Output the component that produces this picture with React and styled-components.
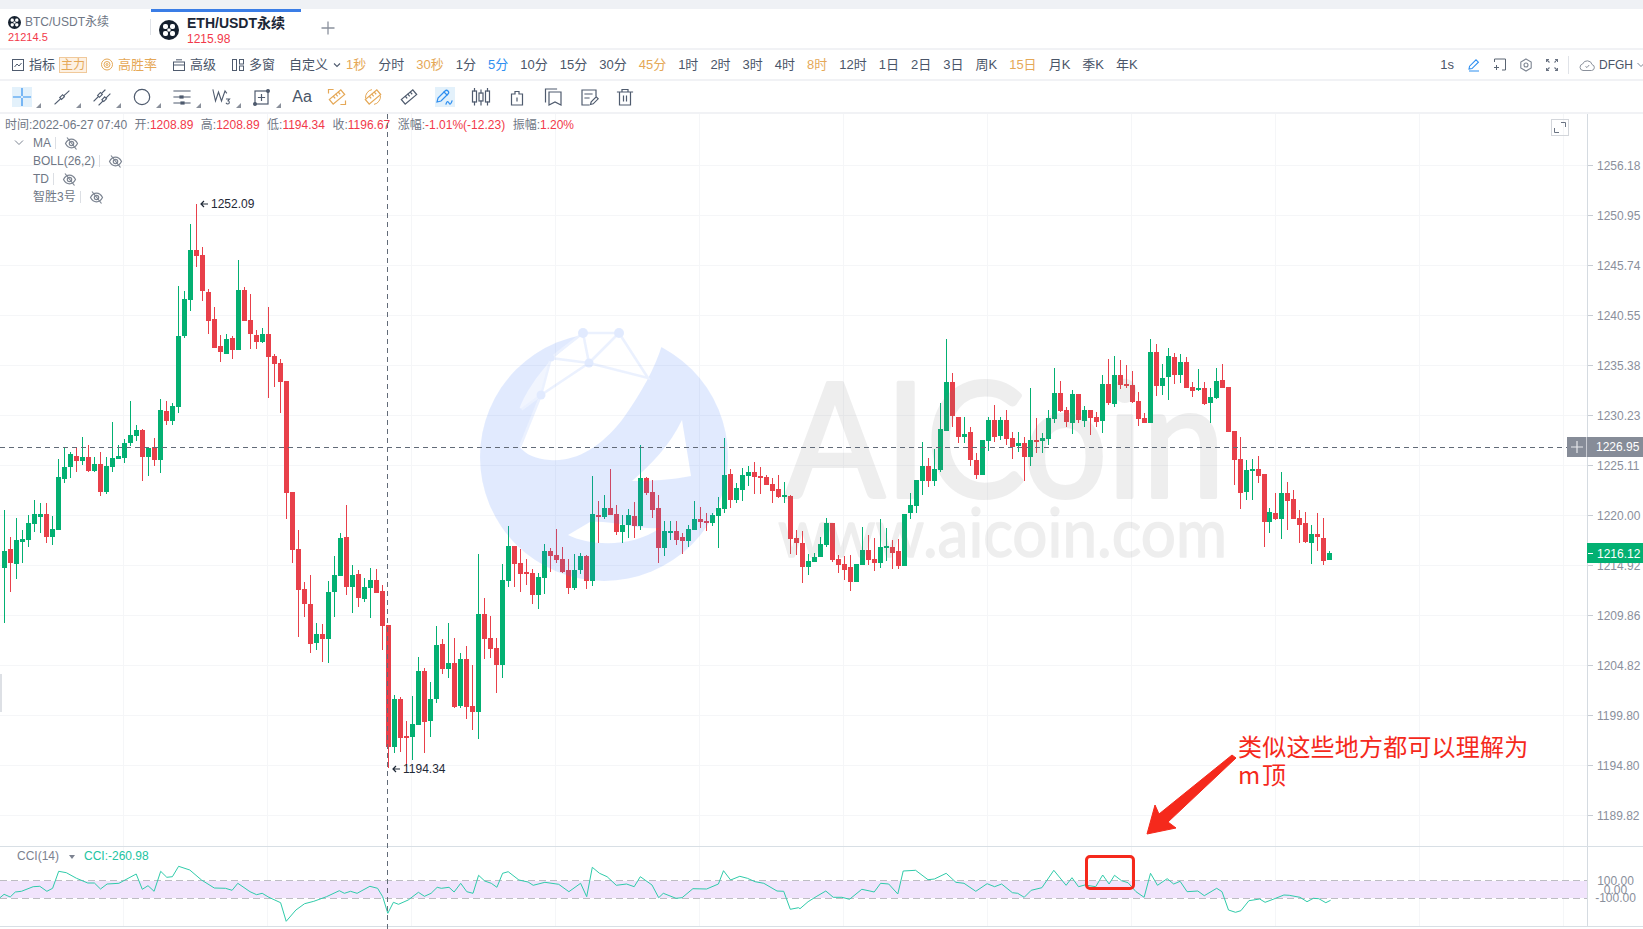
import React from "react";
import styled, { createGlobalStyle } from "styled-components";

const FONT = '"Liberation Sans","Noto Sans CJK SC",sans-serif';
const INK = "#4a5568";
const ORANGE = "#e5a857";
const RED = "#f2394a";
const GREEN = "#03b072";

const Global = createGlobalStyle`
  html, body { margin: 0; padding: 0; background: #fff; }
  body { font-family: ${FONT}; overflow: hidden; }
  #root { width: 1643px; height: 929px; overflow: hidden; }
  * { box-sizing: border-box; }
`;

// [green, wickTop, bodyTop, bodyBottom, wickBottom]
const D = [
[1,510,551,568,623],[0,537,549,563,592],[1,518,540,564,579],[1,530,539,542,563],[1,515,523,540,547],[1,500,514,524,532],[1,503,514,517,533],[0,503,514,537,543],[1,516,529,537,545],[1,459,477,530,530],
[1,447,467,479,483],[1,452,454,467,478],[0,448,456,461,472],[1,437,457,461,465],[0,445,457,471,472],[1,457,464,471,472],[0,452,464,492,496],[1,457,466,492,494],[1,422,458,467,472],[1,445,456,459,459],
[1,439,443,458,463],[1,401,435,443,446],[1,425,430,436,441],[0,429,430,457,481],[1,447,448,457,476],[0,438,447,460,466],[1,399,410,460,473],[0,401,411,421,425],[1,403,406,421,425],[1,286,336,407,413],
[1,291,299,336,338],[1,224,250,300,311],[0,204,250,256,267],[0,247,255,291,301],[0,289,292,321,334],[0,307,319,348,348],[0,335,346,352,362],[1,334,339,354,354],[0,336,338,350,359],[1,260,290,350,350],
[0,287,290,321,321],[0,294,320,334,349],[0,330,335,342,349],[1,328,334,342,343],[0,307,334,357,398],[0,354,356,364,387],[0,359,363,382,413],[0,381,381,493,519],[0,492,492,550,563],[0,530,549,590,637],
[0,582,589,604,617],[0,575,604,644,653],[1,623,634,643,650],[0,624,634,639,662],[1,581,592,639,663],[1,556,575,592,617],[1,533,538,576,576],[0,505,537,587,595],[1,565,575,587,613],[0,570,574,598,607],
[1,578,587,599,602],[1,568,580,588,618],[0,569,580,593,593],[0,585,591,626,650],[0,625,625,747,768],[1,695,699,747,753],[0,697,699,738,752],[0,721,736,738,767],[1,696,724,737,760],[1,657,671,725,725],
[0,668,671,722,753],[1,682,699,721,737],[1,626,645,699,703],[0,639,644,669,674],[1,623,663,669,678],[0,638,663,707,708],[1,653,659,706,708],[0,646,659,707,719],[0,665,706,712,730],[1,554,614,712,739],
[0,598,614,639,659],[0,616,638,649,658],[0,638,648,665,693],[1,564,580,665,678],[1,526,546,581,587],[0,546,546,564,587],[0,549,563,574,592],[0,559,572,574,585],[0,569,573,595,604],[1,573,577,595,609],
[1,544,551,578,594],[0,548,551,556,572],[0,529,555,560,563],[0,547,559,572,573],[0,559,570,588,594],[1,554,570,588,590],[1,553,556,570,574],[0,555,556,581,589],[1,476,514,581,586],[0,501,515,517,543],
[1,495,508,517,519],[0,469,508,515,515],[0,505,514,532,535],[1,515,525,532,543],[1,509,515,525,538],[0,502,516,526,538],[1,445,478,526,530],[0,477,478,493,495],[0,480,492,510,518],[0,495,508,548,563],
[1,521,531,548,556],[1,521,531,532,540],[0,521,531,540,545],[0,533,537,541,554],[1,525,529,541,547],[1,501,519,530,530],[0,507,519,522,528],[0,513,521,523,531],[1,513,515,523,526],[1,497,508,516,548],
[1,438,475,509,513],[0,469,474,500,508],[1,483,488,500,503],[1,468,475,490,501],[1,466,472,476,486],[0,462,472,477,494],[0,467,476,478,494],[0,475,477,485,485],[0,478,484,491,503],[0,475,489,497,498],
[1,482,495,497,503],[0,495,496,539,554],[0,530,538,543,555],[0,531,543,567,583],[1,554,561,567,575],[1,553,557,562,562],[1,537,544,557,557],[1,518,523,545,547],[0,523,523,560,562],[0,555,559,565,573],
[0,556,564,570,580],[0,555,567,582,591],[1,565,564,582,582],[1,527,550,565,565],[0,535,550,560,565],[0,538,559,563,571],[1,519,547,563,568],[1,528,546,548,561],[0,540,547,553,569],[0,539,551,566,569],
[1,514,514,566,566],[1,493,505,513,519],[1,480,480,506,513],[1,442,466,481,495],[0,458,466,481,487],[1,449,469,481,486],[1,403,429,470,472],[1,339,382,431,431],[0,373,382,416,427],[0,417,417,437,443],
[1,417,434,437,443],[0,427,432,460,466],[0,453,460,475,479],[1,440,440,475,475],[1,417,420,441,451],[0,405,420,437,442],[1,417,420,436,440],[0,410,420,439,445],[0,432,438,447,459],[1,432,443,446,452],
[0,437,443,457,481],[1,388,440,457,466],[0,418,440,442,453],[1,433,438,441,453],[1,410,418,439,445],[1,368,393,419,423],[0,381,393,411,412],[0,407,410,422,427],[1,390,394,423,434],[0,394,394,420,423],
[1,406,410,421,427],[0,410,410,418,435],[0,412,417,422,427],[1,375,384,421,433],[0,359,384,403,405],[1,356,375,404,407],[0,360,375,385,389],[0,365,384,386,388],[0,371,385,402,403],[0,392,401,419,426],
[0,413,418,423,423],[1,339,352,423,423],[0,344,352,386,396],[1,364,378,386,395],[1,348,356,377,400],[0,353,357,375,384],[1,354,362,375,383],[0,357,362,388,388],[0,382,387,391,397],[1,369,388,390,391],
[0,382,388,404,405],[1,388,397,403,423],[1,368,381,398,399],[0,364,380,388,388],[0,387,387,432,432],[0,431,431,460,485],[0,437,459,493,509],[1,460,470,492,500],[1,459,469,471,500],[0,456,469,476,483],
[0,474,474,522,547],[1,508,512,522,533],[0,493,513,519,520],[1,472,493,519,539],[0,482,493,501,530],[0,490,499,519,519],[0,510,518,525,543],[0,512,523,542,543],[1,525,534,543,564],[0,513,534,537,551],
[0,518,538,561,565],[1,551,553,560,560]];

const P6 = [[0,203],[8,193],[20,201],[30,186],[42,184],[65,170],[78,169],[92,184],[103,175],[115,124],[130,128],[150,145],[172,159],[185,159],[197,177],[210,162],[233,160],[267,132],[279,178],[290,167],[302,184],[315,124],[327,142],[338,140],[350,109],[372,120],[395,150],[420,174],[442,175],[455,181],[466,160],[490,185],[503,194],[514,190],[527,202],[550,218],[561,274],[580,240],[597,221],[615,214],[640,200],[665,182],[675,190],[687,184],[700,190],[725,169],[740,175],[750,200],[760,250],[771,217],[781,223],[800,210],[820,187],[832,199],[845,190],[857,172],[865,175],[880,172],[890,186],[903,160],[915,185],[927,190],[938,136],[950,153],[963,160],[974,172],[985,130],[996,125],[1017,150],[1035,156],[1045,166],[1068,157],[1095,163],[1115,185],[1138,160],[1150,200],[1161,112],[1175,130],[1190,140],[1208,166],[1228,162],[1243,170],[1255,140],[1278,165],[1291,203],[1300,190],[1325,205],[1337,203],[1358,176],[1385,177],[1408,162],[1418,122],[1432,150],[1450,139],[1465,145],[1480,155],[1497,160],[1523,183],[1536,184],[1549,238],[1565,233]];
const P7 = [[0,566],[15,545],[30,530],[48,513],[62,532],[78,532],[92,538],[115,508],[130,513],[138,516],[150,490],[165,492],[182,522],[192,453],[215,451],[238,479],[250,477],[272,460],[290,487],[305,490],[327,514],[348,491],[362,500],[375,492],[395,518],[405,520],[417,532],[430,511],[450,503],[472,451],[495,496],[506,473],[518,500],[530,495],[550,500],[563,465],[575,492],[585,466],[598,482],[610,488],[625,515],[640,532],[652,460],[665,496],[683,476],[695,492],[707,484],[720,515],[740,513],[752,527],[775,505],[785,515],[797,570],[810,577],[820,572],[835,542],[855,537],[865,547],[880,538],[900,525],[910,526],[930,532],[943,545],[955,535],[965,536],[978,548],[987,541]];
const CCI = [
  ...P6.map(([x, y]) => `${(x / 1.96).toFixed(1)},${(830 + y / 3).toFixed(1)}`),
  ...P7.map(([x, y]) => `${(800 + x / 1.86).toFixed(1)},${(720 + y / 3).toFixed(1)}`),
].join(" ");

const PRICES = ["1256.18","1250.95","1245.74","1240.55","1235.38","1230.23","1225.11","1220.00","1214.92","1209.86","1204.82","1199.80","1194.80","1189.82"];
const VGRID = Array.from({ length: 11 }, (_, i) => 123 + 144 * i);
const HGRID = PRICES.map((_, i) => 165 + 50 * i);

const Page = styled.div`
  width: 1643px;
  height: 929px;
  display: flex;
  flex-direction: column;
  background: #fff;
  color: ${INK};
  font: 13px/1 ${FONT};
`;
const TopStrip = styled.div`height: 9px; background: #eff1f5; flex: none;`;
const TabBar = styled.div`
  height: 41px;
  flex: none;
  display: flex;
  border-bottom: 2px solid #f1f2f5;
`;
const Tab = styled.div`
  position: relative;
  display: flex;
  width: ${p => p.$w}px;
  flex: none;
`;
const SmallTab = styled(Tab)`
  flex-direction: column;
  padding: 7px 0 0 8px;
  gap: 2px;
`;
const ActiveTab = styled(Tab)`
  border-top: 3px solid #3a7de6;
  padding: 4px 0 0 8px;
  gap: 8px;
  align-items: flex-start;
`;
const TabDivider = styled.span`
  width: 1px;
  height: 16px;
  margin: 10px 0 0;
  background: #dfe2e7;
  flex: none;
`;
const TabTitleRow = styled.div`
  display: flex;
  align-items: center;
  gap: 4px;
  font-size: 12px;
  color: #6f7785;
  line-height: 13px;
`;
const TabTitle = styled.div`
  font-size: 14px;
  line-height: 15px;
  font-weight: 700;
  color: #1b2636;
`;
const TabPrice = styled.div`
  font-size: ${p => p.$size}px;
  color: ${RED};
  line-height: 13px;
  margin-top: ${p => p.$mt || 0}px;
`;
const TabText = styled.div`display: flex; flex-direction: column;`;
const LogoSlot = styled.div`display: flex; margin-top: 4px;`;
const AddTab = styled.div`
  margin: 12px 0 0 20px;
  color: #8b919d;
  display: flex;
`;
const PeriodBar = styled.div`
  height: 31px;
  flex: none;
  display: flex;
  align-items: center;
  padding-left: 12px;
  border-bottom: 2px solid #f1f2f5;
`;
const MenuItem = styled.div`
  display: flex;
  align-items: center;
  gap: 5px;
  margin-right: ${p => p.$mr ?? 16}px;
  color: ${p => p.$color || INK};
  white-space: nowrap;
`;
const Badge = styled.span`
  width: 28px;
  height: 16px;
  display: flex;
  align-items: center;
  justify-content: center;
  background: #fdf1e3;
  border: 1px solid #f0c99b;
  color: ${ORANGE};
  font-size: 12px;
`;
const Periods = styled.div`display: flex; gap: 12px;`;
const Period = styled.span`
  color: ${p => p.$tone === "o" ? ORANGE : p.$tone === "b" ? "#2f8ff0" : INK};
  white-space: nowrap;
`;
const RightTools = styled.div`
  margin-left: auto;
  display: flex;
  align-items: center;
  gap: 14px;
`;
const VSep = styled.span`width: 1px; height: 18px; background: #e0e3e8; margin: 0 -4px 0 -4px;`;
const Account = styled.div`
  display: flex;
  align-items: center;
  gap: 4px;
  font-size: 12px;
  color: ${INK};
  margin-left: -10px;
`;
const Chevron = styled.svg`margin-right: -2px;`;
const ToolBar = styled.div`
  height: 33px;
  flex: none;
  display: flex;
  align-items: center;
  padding-left: 2px;
  border-bottom: 2px solid #f1f2f5;
`;
const Tool = styled.div`
  position: relative;
  width: ${p => p.$w || 40}px;
  height: 20px;
  margin-left: ${p => p.$ml || 0}px;
  display: flex;
  align-items: center;
  justify-content: center;
  flex: none;
  ${p => p.$corner && `
    &::after {
      content: "";
      position: absolute;
      right: 1px;
      bottom: -1px;
      border-style: solid;
      border-width: 0 0 5px 5px;
      border-color: transparent transparent #8a909b transparent;
    }
  `}
`;
const ToolFace = styled.div`
  width: 20px;
  height: 20px;
  display: flex;
  align-items: center;
  justify-content: center;
  background: ${p => p.$on ? "#e3f1fb" : "transparent"};
  font-size: 16px;
  color: ${INK};
`;
const Chart = styled.div`
  position: relative;
  flex: 1;
  display: flex;
  flex-direction: column;
`;
const Pane = styled.div`
  position: relative;
  display: flex;
  height: ${p => p.$h}px;
  flex: none;
  border-bottom: 1px solid #d8dfe5;
`;
const Plot = styled.div`
  position: relative;
  width: 1587px;
  flex: none;
  svg { display: block; }
`;
const Axis = styled.div`
  flex: 1;
  border-left: 1px solid #d5dbe1;
  padding-top: 26px;
  display: flex;
  flex-direction: column;
`;
const AxisLabel = styled.div`
  position: relative;
  height: 50px;
  padding: 19px 0 0 9px;
  line-height: 14px;
  font-size: 12px;
  color: #8a8f9c;
  &::before {
    content: "";
    position: absolute;
    left: 0;
    top: 25px;
    width: 5px;
    height: 1px;
    background: #c8cdd4;
  }
`;
const CciAxis = styled(Axis)`
  padding-top: 30px;
  align-items: center;
`;
const CciLabel = styled.div`
  height: 8.5px;
  line-height: 8.5px;
  font-size: 12px;
  color: #8a8f9c;
`;
const VCross = styled.div`
  position: absolute;
  left: 387px;
  top: 0;
  bottom: 0;
  width: 1px;
  background: repeating-linear-gradient(to bottom, #626b78 0 5px, transparent 5px 9px);
  pointer-events: none;
`;
const InfoLine = styled.div`
  position: absolute;
  left: 5px;
  top: 5px;
  display: flex;
  gap: 7.5px;
  font-size: 12px;
  line-height: 13px;
  color: #6f7785;
  white-space: nowrap;
`;
const Red = styled.span`color: ${RED};`;
const Legend = styled.div`
  position: absolute;
  left: 33px;
  top: 20px;
  display: flex;
  flex-direction: column;
  font-size: 12px;
  color: #6f7785;
`;
const LegendRow = styled.div`
  position: relative;
  height: 18px;
  display: flex;
  align-items: center;
`;
const LegendSep = styled.span`
  width: 1px;
  height: 12px;
  background: #dcdfe4;
  margin: 0 8px 0 4px;
`;
const Collapse = styled.svg`position: absolute; left: -19px; top: 5px;`;
const Extreme = styled.div`
  position: absolute;
  left: ${p => p.$x}px;
  top: ${p => p.$y}px;
  display: flex;
  align-items: center;
  gap: 3px;
  font-size: 12px;
  line-height: 14px;
  color: #1f2937;
`;
const ExpandBox = styled.div`
  position: absolute;
  left: 1551px;
  top: 5px;
  width: 18px;
  height: 17px;
  border: 1px solid #d3d6db;
  display: flex;
  align-items: center;
  justify-content: center;
`;
const ScrollThumb = styled.div`
  position: absolute;
  left: 0;
  top: 560px;
  width: 2px;
  height: 38px;
  background: #dde0e5;
`;
const Note = styled.div`
  position: absolute;
  left: 1238px;
  top: 618px;
  font: 24px/28px "Noto Sans CJK SC", ${FONT};
  letter-spacing: 0.2px;
  word-spacing: -4px;
  color: #f5291c;
  white-space: nowrap;
`;
const CrossTag = styled.div`
  position: absolute;
  left: 1567px;
  top: 323px;
  width: 76px;
  height: 20px;
  display: flex;
  align-items: center;
  background: #868c98;
  color: #fff;
  font-size: 12px;
  line-height: 22px;
`;
const CrossPlus = styled.div`
  width: 20px;
  height: 20px;
  flex: none;
  display: flex;
  align-items: center;
  justify-content: center;
  border-right: 1px solid #c9ccd3;
  margin-right: 9px;
`;
const LastTag = styled.div`
  position: absolute;
  left: 1587px;
  top: 429px;
  width: 56px;
  height: 20px;
  padding: 1px 0 0 10px;
  display: flex;
  align-items: center;
  background: ${GREEN};
  color: #fff;
  font-size: 12px;
  &::before {
    content: "";
    position: absolute;
    left: 1px;
    top: 10px;
    width: 5px;
    height: 1px;
    background: #fff;
  }
`;
const CciLegend = styled.div`
  position: absolute;
  left: 17px;
  top: 3px;
  display: flex;
  align-items: center;
  font-size: 12px;
  line-height: 13px;
  color: #7c8290;
`;
const Caret = styled.span`
  width: 0;
  height: 0;
  margin: 0 9px 0 10px;
  border-style: solid;
  border-width: 4px 3.5px 0 3.5px;
  border-color: #7c8290 transparent transparent transparent;
`;
const CciValue = styled.span`color: #22c4a1;`;
const Marker = styled.div`
  position: absolute;
  left: 1085px;
  top: 8px;
  width: 50px;
  height: 35px;
  border: 3px solid #f5291c;
  border-radius: 5px;
`;

const Ico = ({ s = 20, w = 1.2, c = "#4f5b6e", children }) => (
  <svg width={s} height={s} viewBox="0 0 20 20" fill="none" stroke={c} strokeWidth={w} strokeLinecap="square">{children}</svg>
);

const OkLogo = ({ s }) => (
  <svg width={s} height={s} viewBox="0 0 20 20">
    <circle cx="10" cy="10" r="10" fill="#15202e" />
    <g fill="#fff">
      <rect x="4" y="4" width="5" height="5" rx="2" />
      <rect x="11" y="4" width="5" height="5" rx="2" />
      <rect x="4" y="11" width="5" height="5" rx="2" />
      <rect x="11" y="11" width="5" height="5" rx="2" />
      <rect x="8.4" y="8.4" width="3.2" height="3.2" rx="1" />
    </g>
  </svg>
);

const EyeOff = () => (
  <svg width="15" height="15" viewBox="0 0 15 15" fill="none" stroke="#7d8592" strokeWidth="1.2">
    <path d="M1.5 7.5C3 4.6 5 3.2 7.5 3.2s4.5 1.4 6 4.3c-1.5 2.9-3.5 4.3-6 4.3s-4.5-1.4-6-4.3z" />
    <circle cx="7.5" cy="7.5" r="2.2" />
    <path d="M3 1.5l9.5 12" />
  </svg>
);

const LeftArrow = () => (
  <svg width="8" height="8" viewBox="0 0 8 8" fill="none" stroke="#1f2937" strokeWidth="1.2"><path d="M8 4H1M4 1L1 4l3 3" /></svg>
);

const RulerShape = ({ c }) => (
  <g stroke={c} fill="none" strokeWidth="1.2">
    <rect x="-7.5" y="-3" width="15" height="6" transform="rotate(-40 10 10) translate(10 10)" />
    <path d="M6.5 9.5l1.3 1.5M9 7.4l1.3 1.5M11.5 5.3l1.3 1.5" />
  </g>
);

const TOOLS = [
  { on: true, corner: true, icon: <Ico c="#2f8ff0"><path d="M1.5 10h7M11.5 10h7M10 1.5v7M10 11.5v7" /></Ico> },
  { corner: true, icon: <Ico w={1.1}><path d="M3 17L17 4" /><rect x="8" y="8.8" width="4" height="2.6" transform="rotate(-43 10 10)" fill="#fff" /></Ico> },
  { corner: true, icon: <Ico w={1.1}><path d="M2 14L13 3M7 18L18 7" /><rect x="6" y="6.6" width="4" height="2.6" transform="rotate(-45 8 8)" fill="#fff" /><rect x="10" y="11" width="4" height="2.6" transform="rotate(-45 12 12)" fill="#fff" /></Ico> },
  { corner: true, icon: <Ico s={20}><circle cx="10" cy="10" r="7.7" /></Ico> },
  { corner: true, icon: <Ico s={20}><path d="M2 4h16M2 10h16M2 16h16" /><rect x="8" y="9" width="3" height="2" fill="#4f5b6e" /><rect x="9" y="15" width="3" height="2" fill="#4f5b6e" /></Ico> },
  { corner: true, icon: <Ico w={1.1}><path d="M1 3l2.5 11 3-9 3 9 3.5-10 1.5 2" /><path d="M14.5 12h3l-1.5 1.8c1.8.2 1.8 3.2-.2 3.2-.8 0-1.3-.4-1.5-.8" /></Ico> },
  { corner: true, icon: <Ico><rect x="3" y="4" width="13" height="13" /><path d="M9.5 7.5v6M6.5 10.5h6" /><circle cx="16" cy="4" r="1.4" fill="#4f5b6e" /><circle cx="3" cy="17" r="1.4" fill="#4f5b6e" /></Ico> },
  { text: "Aa" },
];
const TOOLS2 = [
  { icon: <Ico c={ORANGE}><RulerShape c={ORANGE} /><path d="M1.5 6V2.5H6M18.5 14v3.5H14" /></Ico> },
  { icon: <Ico c={ORANGE} w={1}><RulerShape c={ORANGE} /><path d="M2.5 11a7.5 7.5 0 0 1 6-8.3M17.5 9a7.5 7.5 0 0 1-6 8.3" /></Ico> },
  { icon: <Ico><RulerShape c="#4f5b6e" /></Ico> },
  { on: true, icon: <Ico c="#2f8ff0"><path d="M2 15l1-4 7-7c1-1 2-1 3 0s1 2 0 3l-7 7z" /><path d="M9 5l3 3M11 17c1-3 2-3 3-1s2 1 3-2" /></Ico> },
  { icon: <Ico><rect x="1.5" y="4" width="4" height="11" /><rect x="8" y="6" width="4" height="8" /><rect x="14.5" y="4" width="4" height="11" /><path d="M3.5 1.5V4M3.5 15v3M10 3v3M10 14v4M16.5 1.5V4M16.5 15v3" /></Ico> },
  { icon: <Ico><path d="M4.5 7h3.5V4.5h4V7h3.5v11h-11z" /><path d="M10 11v3" /></Ico> },
  { icon: <Ico><path d="M2.5 15V2h11" /><path d="M6 5h12v13l-6-3-6 3z" /></Ico> },
  { icon: <Ico><path d="M17 9V3H3v15h7" /><path d="M6 7h7M6 11h4" /><path d="M11.5 17.5l.7-2.7 5-5 2 2-5 5z" /></Ico> },
  { icon: <Ico><path d="M2.5 5h15M7 5V2.5h6V5M4.5 5v13h11V5" /><path d="M8.5 9v5M11.5 9v5" /></Ico> },
];

const PERIODS = [
  ["1秒","o"],["分时"],["30秒","o"],["1分"],["5分","b"],["10分"],["15分"],["30分"],["45分","o"],["1时"],["2时"],["3时"],["4时"],["8时","o"],["12时"],["1日"],["2日"],["3日"],["周K"],["15日","o"],["月K"],["季K"],["年K"],
];

const Watermark = () => (
  <g>
    <defs>
      <mask id="wm" maskUnits="userSpaceOnUse" x="470" y="320" width="270" height="270">
        <circle cx="604" cy="457" r="124" fill="#fff" />
        <path d="M551 360L583 333L619 331L662 345C655 368 642 392 622 420C600 448 575 462 550 460C535 459 525 454 520 447L541 395Z" fill="#000" />
        <path d="M551 360L541 395L518 412C525 392 538 375 551 360Z" fill="#777" />
        <path d="M682 420L691 476C672 480 650 481 632 481C652 464 670 445 682 420Z" fill="#000" />
        <path d="M568 535C590 546 632 548 660 528C638 530 612 520 590 522Z" fill="#000" />
        <g stroke="#aaa" strokeWidth="2.6" fill="none">
          <path d="M583 333L619 333L589 363L583 333L551 358L589 363L648 378L619 333M589 363L541 395L551 358M541 395L518 412M541 395L520 447" />
        </g>
        <g fill="#fff">
          <circle cx="583" cy="333" r="5" /><circle cx="619" cy="333" r="5" /><circle cx="589" cy="363" r="4.5" />
          <circle cx="551" cy="358" r="3.5" /><circle cx="541" cy="395" r="4.5" /><circle cx="518" cy="412" r="4.5" />
        </g>
      </mask>
    </defs>
    <rect x="470" y="320" width="270" height="270" fill="rgb(60,120,250)" opacity="0.15" mask="url(#wm)" />
    <g fill="rgb(120,120,120)" opacity="0.12" stroke="rgb(120,120,120)" strokeLinejoin="round" fontFamily="Lato, sans-serif">
      <text x="785" y="497" fontSize="160" strokeWidth="4" textLength="440" lengthAdjust="spacingAndGlyphs">AICoin</text>
      <text x="778" y="557" fontSize="68" strokeWidth="1.5" textLength="449" lengthAdjust="spacingAndGlyphs">www.aicoin.com</text>
    </g>
  </g>
);

const Candles = () => (
  <g shapeRendering="crispEdges">
    {D.map(([g, wt, bt, bb, wb], i) => {
      const x = Math.round(4.63 + 5.997 * i - 2.5);
      const c = g ? GREEN : "#e8404a";
      return (
        <g key={i} fill={c}>
          <rect x={x + 2} y={wt} width="1" height={Math.max(wb - wt, 1)} />
          <rect x={x} y={bt} width="5" height={Math.max(bb - bt, 2)} />
        </g>
      );
    })}
  </g>
);

export default function App() {
  return (
    <Page>
      <Global />
      <TopStrip />
      <TabBar>
        <SmallTab $w={150}>
          <TabTitleRow><OkLogo s={13} />BTC/USDT永续</TabTitleRow>
          <TabPrice $size={11}>21214.5</TabPrice>
        </SmallTab>
        <TabDivider />
        <ActiveTab $w={150}>
          <LogoSlot><OkLogo s={20} /></LogoSlot>
          <TabText>
            <TabTitle>ETH/USDT永续</TabTitle>
            <TabPrice $size={12} $mt={2}>1215.98</TabPrice>
          </TabText>
        </ActiveTab>
        <AddTab>
          <svg width="14" height="14" viewBox="0 0 14 14" stroke="#8b919d" strokeWidth="1.3"><path d="M7 .5v13M.5 7h13" /></svg>
        </AddTab>
      </TabBar>
      <PeriodBar>
        <MenuItem $mr={4}>
          <svg width="12" height="12" viewBox="0 0 12 12" fill="none" stroke="#4f5b6e" strokeWidth="1"><rect x=".5" y=".5" width="11" height="11" /><path d="M2.5 8l2.5-3 2 2 2.5-3" /></svg>
          指标
        </MenuItem>
        <MenuItem $mr={14}><Badge>主力</Badge></MenuItem>
        <MenuItem $color={ORANGE}>
          <svg width="12" height="13" viewBox="0 0 12 13" fill="none" stroke={ORANGE} strokeWidth="1"><circle cx="6" cy="6.5" r="5.5" /><circle cx="6" cy="6.5" r="3" /><circle cx="6" cy="6.5" r="1" /></svg>
          高胜率
        </MenuItem>
        <MenuItem>
          <svg width="12" height="12" viewBox="0 0 12 12" fill="none" stroke="#4f5b6e" strokeWidth="1"><rect x=".5" y="3" width="11" height="8.5" /><path d="M.5 6h11M3 .8h6" /></svg>
          高级
        </MenuItem>
        <MenuItem $mr={14}>
          <svg width="12" height="12" viewBox="0 0 12 12" fill="none" stroke="#4f5b6e" strokeWidth="1"><rect x=".5" y=".5" width="4" height="11" /><rect x="7.5" y=".5" width="4" height="4.5" /><rect x="7.5" y="7" width="4" height="4.5" /></svg>
          多窗
        </MenuItem>
        <MenuItem $mr={5}>
          自定义
          <svg width="8" height="6" viewBox="0 0 8 6" fill="none" stroke="#4f5b6e" strokeWidth="1.1"><path d="M1 1.5l3 3 3-3" /></svg>
        </MenuItem>
        <Periods>
          {PERIODS.map(([t, tone]) => <Period key={t} $tone={tone}>{t}</Period>)}
        </Periods>
        <RightTools>
          <Period>1s</Period>
          <svg width="12" height="14" viewBox="0 0 12 14" fill="none" stroke="#2f8ff0" strokeWidth="1.1"><path d="M1 11l.6-2.8L8 1.8l2.4 2.4L4 10.6zM1 13h10" /></svg>
          <svg width="12" height="13" viewBox="0 0 12 13" fill="none" stroke="#5a6472" strokeWidth="1"><path d="M.5 1h11v11H8M0 9.5h5M2.5 7v5M.5 1v3" /></svg>
          <svg width="12" height="14" viewBox="0 0 12 14" fill="none" stroke="#7d8592" strokeWidth="1.1"><path d="M6 1l5.2 3v6L6 13 .8 10V4z" /><circle cx="6" cy="7" r="2" /></svg>
          <svg width="12" height="12" viewBox="0 0 12 12" fill="none" stroke="#6a7382" strokeWidth="1.1"><path d="M.5 3V.5H3M9 .5h2.5V3M11.5 9v2.5H9M3 11.5H.5V9M1 1l2.5 2.5M11 1L8.5 3.5M11 11L8.5 8.5M1 11l2.5-2.5" /></svg>
          <VSep />
          <svg width="16" height="12" viewBox="0 0 16 12" fill="none" stroke="#8a909b" strokeWidth="1"><path d="M4 11.5h8.5a3 3 0 0 0 .6-5.9A5 5 0 0 0 3.6 5 3.3 3.3 0 0 0 4 11.5z" /><path d="M6.5 7.5l1.5 1 2.2-2.5" /></svg>
          <Account>
            DFGH
            <Chevron width="8" height="6" viewBox="0 0 8 6" fill="none" stroke="#7d8592" strokeWidth="1"><path d="M.5 1l3.5 3.5L7.5 1" /></Chevron>
          </Account>
        </RightTools>
      </PeriodBar>
      <ToolBar>
        {TOOLS.map((t, i) => (
          <Tool key={i} $corner={t.corner}>
            <ToolFace $on={t.on}>{t.text || t.icon}</ToolFace>
          </Tool>
        ))}
        {TOOLS2.map((t, i) => (
          <Tool key={i} $w={36} $ml={i === 0 ? -3 : 0}>
            <ToolFace $on={t.on}>{t.icon}</ToolFace>
          </Tool>
        ))}
      </ToolBar>
      <Chart>
        <Pane $h={733}>
          <Plot>
            <svg width="1587" height="732" viewBox="0 114 1587 732">
              <g stroke="#f5f6f8" strokeWidth="1" shapeRendering="crispEdges">
                {HGRID.map(y => <line key={y} x1="0" x2="1587" y1={y + 0.5} y2={y + 0.5} />)}
                {VGRID.map(x => <line key={x} x1={x + 0.5} x2={x + 0.5} y1="114" y2="846" />)}
              </g>
              <Candles />
              <Watermark />
              <line x1="0" x2="1567" y1="447.5" y2="447.5" stroke="#626b78" strokeDasharray="5 4" shapeRendering="crispEdges" />
              <polygon points="1147,834 1155,805 1159,814 1232,755 1236,758 1168,822 1176,828" fill="#f5291c" stroke="#f5291c" strokeWidth="1" strokeLinejoin="round" />
            </svg>
            <InfoLine>
              <span>时间:2022-06-27 07:40</span>
              <span>开:<Red>1208.89</Red></span>
              <span>高:<Red>1208.89</Red></span>
              <span>低:<Red>1194.34</Red></span>
              <span>收:<Red>1196.67</Red></span>
              <span>涨幅:<Red>-1.01%(-12.23)</Red></span>
              <span>振幅:<Red>1.20%</Red></span>
            </InfoLine>
            <Legend>
              <LegendRow>
                <Collapse width="10" height="8" viewBox="0 0 10 8" fill="none" stroke="#7d8592" strokeWidth="1"><path d="M1 1.5l4 4 4-4" /></Collapse>
                MA<LegendSep /><EyeOff />
              </LegendRow>
              <LegendRow>BOLL(26,2)<LegendSep /><EyeOff /></LegendRow>
              <LegendRow>TD<LegendSep /><EyeOff /></LegendRow>
              <LegendRow>智胜3号<LegendSep /><EyeOff /></LegendRow>
            </Legend>
            <Extreme $x={200} $y={83}><LeftArrow />1252.09</Extreme>
            <Extreme $x={392} $y={648}><LeftArrow />1194.34</Extreme>
            <ExpandBox>
              <svg width="12" height="11" viewBox="0 0 12 11" fill="none" stroke="#6a7382" strokeWidth="1"><path d="M7 .5h4.5V5M.5 6v4.5H5" /></svg>
            </ExpandBox>
            <ScrollThumb />
            <Note>类似这些地方都可以理解为<br />m 顶</Note>
          </Plot>
          <Axis>
            {PRICES.map(p => <AxisLabel key={p}>{p}</AxisLabel>)}
          </Axis>
          <CrossTag>
            <CrossPlus>
              <svg width="12" height="12" viewBox="0 0 12 12" stroke="#e6e8ec" strokeWidth="1.2"><path d="M6 0v12M0 6h12" /></svg>
            </CrossPlus>
            <span>1226.95</span>
          </CrossTag>
          <LastTag>1216.12</LastTag>
        </Pane>
        <Pane $h={80}>
          <Plot>
            <svg width="1587" height="79" viewBox="0 847 1587 79">
              <g stroke="#f5f6f8" shapeRendering="crispEdges">
                {VGRID.map(x => <line key={x} x1={x + 0.5} x2={x + 0.5} y1="847" y2="926" />)}
              </g>
              <rect x="0" y="881" width="1587" height="17" fill="#f1e4fc" />
              <g stroke="#bdbdc2" strokeDasharray="7 4" shapeRendering="crispEdges">
                <line x1="0" x2="1587" y1="880.5" y2="880.5" />
                <line x1="0" x2="1587" y1="898.5" y2="898.5" />
              </g>
              <polyline points={CCI} fill="none" stroke="#2fcbaa" strokeWidth="1" />
            </svg>
            <CciLegend>CCI(14)<Caret /><CciValue>CCI:-260.98</CciValue></CciLegend>
            <Marker />
          </Plot>
          <CciAxis>
            <CciLabel>100.00</CciLabel>
            <CciLabel>0.00</CciLabel>
            <CciLabel>-100.00</CciLabel>
          </CciAxis>
        </Pane>
        <VCross />
      </Chart>
    </Page>
  );
}
